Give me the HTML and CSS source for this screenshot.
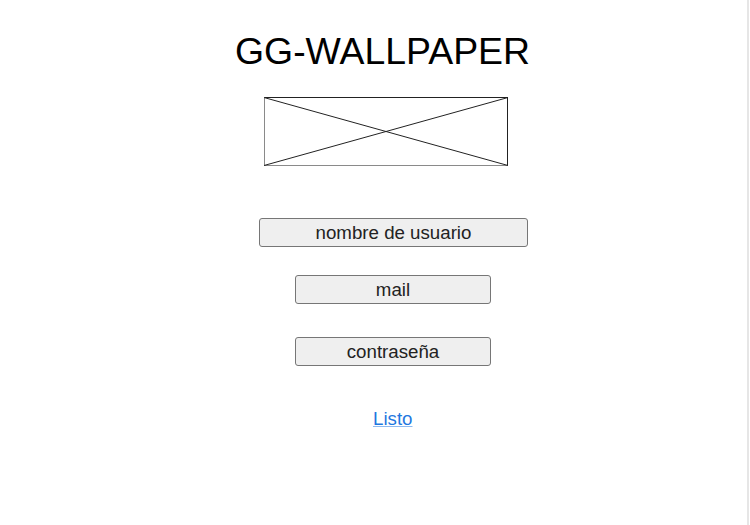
FILE: index.html
```html
<!DOCTYPE html>
<html lang="es">
<head>
<meta charset="utf-8">
<title>GG-WALLPAPER</title>
<link rel="stylesheet" href="styles.css">
</head>
<body>
<div class="page">
  <h1 class="title">GG-WALLPAPER</h1>
  <svg class="placeholder" width="244" height="69" viewBox="0 0 244 69" aria-label="imagen">
    <line x1="0" y1="0.5" x2="244" y2="0.5" stroke="#222" stroke-width="1"/>
    <line x1="243.5" y1="0" x2="243.5" y2="69" stroke="#222" stroke-width="1"/>
    <line x1="0.5" y1="0" x2="0.5" y2="69" stroke="#8a8a8a" stroke-width="1"/>
    <line x1="0" y1="68.5" x2="244" y2="68.5" stroke="#8a8a8a" stroke-width="1"/>
    <line x1="0" y1="0.5" x2="244" y2="68.5" stroke="#222" stroke-width="1"/>
    <line x1="0" y1="68.5" x2="244" y2="0.5" stroke="#222" stroke-width="1"/>
  </svg>
  <button class="field field-user" type="button">nombre de usuario</button>
  <button class="field field-mail" type="button">mail</button>
  <button class="field field-pass" type="button">contraseña</button>
  <a class="done" href="#">Listo</a>
</div>
</body>
</html>
```

FILE: styles.css
```css
html, body {
  margin: 0;
  padding: 0;
  background: #ffffff;
}

body {
  font-family: "Liberation Sans", Arial, sans-serif;
}

.page {
  width: 749px;
  min-height: 525px;
  box-sizing: border-box;
  border-right: 2px solid #e6e6e6;
  padding-top: 30px;
  display: flex;
  flex-direction: column;
  align-items: flex-start;
}

.title {
  margin: 0 0 0 235px;
  font-size: 37.4px;
  line-height: 43px;
  font-weight: normal;
  color: #000;
}

.placeholder {
  display: block;
  margin: 24px 0 0 264px;
}

.field {
  display: block;
  box-sizing: border-box;
  height: 29px;
  padding: 0;
  border: 1px solid #767676;
  border-radius: 3px;
  background: #efefef;
  color: #222;
  font-family: "Liberation Sans", Arial, sans-serif;
  font-size: 18.7px;
  line-height: 25px;
  text-align: center;
}

.field-user {
  width: 269px;
  margin: 52px 0 0 259px;
}

.field-mail {
  width: 196px;
  margin: 28px 0 0 295px;
}

.field-pass {
  width: 196px;
  margin: 33px 0 0 295px;
}

.done {
  display: block;
  margin: 42px 0 0 373px;
  font-size: 18.7px;
  line-height: 22px;
  color: #1f78e0;
  text-decoration: underline;
  text-decoration-color: #8fbaf0;
}
```
